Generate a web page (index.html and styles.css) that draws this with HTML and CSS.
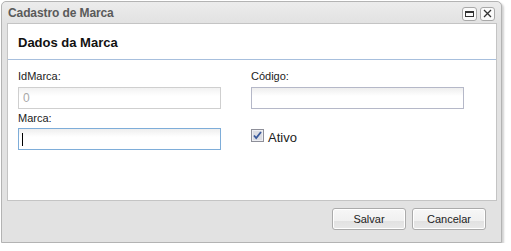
FILE: index.html
```html
<!DOCTYPE html>
<html>
<head>
<meta charset="utf-8">
<link rel="stylesheet" href="styles.css">
</head>
<body>
<div class="win">
  <div class="titlebar">
    <span class="title">Cadastro de Marca</span>
    <div class="tools">
      <span class="tool"><svg width="13" height="12" viewBox="0 0 13 12"><rect x="2.5" y="3.5" width="8" height="5" fill="none" stroke="#333" stroke-width="1"/><rect x="2" y="3" width="9" height="2" fill="#333"/></svg></span>
      <span class="tool"><svg width="13" height="12" viewBox="0 0 13 12"><path d="M3 2 L10 9 M10 2 L3 9" stroke="#333" stroke-width="1.3" fill="none"/></svg></span>
    </div>
  </div>
  <div class="panel">
    <div class="panel-header">Dados da Marca</div>
    <div class="form">
      <div class="col col-left">
        <label class="lbl">IdMarca:</label>
        <div class="input disabled">0</div>
        <label class="lbl lbl-2">Marca:</label>
        <div class="input focus"><span class="caret"></span></div>
      </div>
      <div class="col col-right">
        <label class="lbl">Código:</label>
        <div class="input"></div>
        <div class="check-row">
          <span class="checkbox"><svg width="13" height="13" viewBox="0 0 13 13"><rect x="0.5" y="0.5" width="12" height="12" fill="#dcdde3" stroke="#8e8f99"/><rect x="1.5" y="1.5" width="10" height="10" fill="none" stroke="#eeeff3"/><path d="M3 6.5 L5.2 9 L10 3" stroke="#3a5a9c" stroke-width="1.8" fill="none"/></svg></span>
          <span class="check-label">Ativo</span>
        </div>
      </div>
    </div>
  </div>
  <div class="buttons">
    <button class="btn">Salvar</button>
    <button class="btn">Cancelar</button>
  </div>
</div>
</body>
</html>
```
FILE: styles.css
```css
* { box-sizing: border-box; }
html, body { margin: 0; padding: 0; background: #fff; }
body { font-family: "Liberation Sans", Arial, sans-serif; }

.win {
  margin: 1px 0 0 1px;
  width: 501px;
  height: 242px;
  border: 1px solid #b3b3b3;
  border-radius: 5px 5px 0 0;
  background: #e2e2e2;
  box-shadow: 2px 2px 2px rgba(0,0,0,0.18);
  display: flex;
  flex-direction: column;
}

.titlebar {
  height: 21px;
  display: flex;
  align-items: center;
  justify-content: space-between;
  padding: 0 6px 0 6px;
  background: linear-gradient(#ececec, #e2e2e2);
  border-radius: 5px 5px 0 0;
}
.title {
  font-weight: bold;
  font-size: 12px;
  color: #5a5a5a;
  letter-spacing: -0.1px;
  margin-top: 1px;
}
.tools { display: flex; gap: 3px; margin-top: 3px; }
.tool {
  width: 15px;
  height: 14px;
  border: 1px solid #a8a8a8;
  border-radius: 3px;
  background: #fafafa;
  display: flex;
  align-items: center;
  justify-content: center;
}
.tool svg { display: block; }

.panel {
  margin: 0 4px 0 5px;
  height: 178px;
  border: 1px solid #c4c4c4;
  background: #fff;
}
.panel-header {
  height: 36px;
  padding: 11px 0 0 10px;
  font-size: 13px;
  line-height: 16px;
  font-weight: bold;
  color: #111;
  border-bottom: 1px solid #a7bfdd;
}
.form {
  display: flex;
  gap: 30px;
  padding: 10px 0 0 10px;
}
.col { display: flex; flex-direction: column; }
.col-left { width: 203px; }
.col-right { width: 213px; }
.lbl {
  font-size: 11px;
  line-height: 13px;
  color: #222;
  height: 13px;
  margin-bottom: 4px;
}
.lbl-2 { margin-top: 3px; margin-bottom: 3px; }
.input {
  height: 22px;
  border: 1px solid #b5b8c8;
  background: linear-gradient(#eeeeee, #ffffff 8px);
  font-size: 12px;
  line-height: 20px;
  padding-left: 4px;
  position: relative;
}
.input.disabled {
  border-color: #cfcfcf;
  color: #a8a8a8;
  background: linear-gradient(#f2f2f2, #ffffff 8px);
}
.input.focus { border-color: #7eadd9; }
.caret {
  position: absolute;
  left: 3px;
  top: 4px;
  width: 1px;
  height: 13px;
  background: #000;
}
.check-row {
  display: flex;
  align-items: flex-start;
  gap: 4px;
  margin-top: 20px;
}
.checkbox { width: 13px; height: 13px; }
.checkbox svg { display: block; }
.check-label {
  font-size: 13px;
  line-height: 15px;
  color: #222;
  margin-top: 1px;
}

.buttons {
  display: flex;
  justify-content: flex-end;
  gap: 6px;
  padding: 7px 15px 0 0;
}
.btn {
  width: 74px;
  height: 22px;
  border: 1px solid #ababab;
  border-radius: 3px;
  background: linear-gradient(#f7f7f7 0%, #f0f0f0 60%, #e2e2e2 62%, #e8e8e8 100%);
  box-shadow: inset 0 0 0 1px #fff;
  font-family: "Liberation Sans", Arial, sans-serif;
  font-size: 11px;
  color: #222;
  padding: 0;
}
```
